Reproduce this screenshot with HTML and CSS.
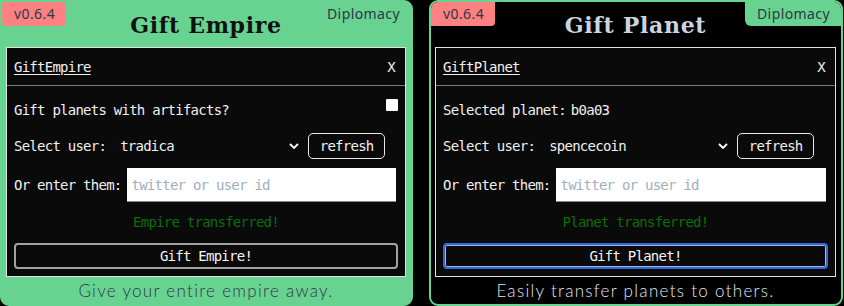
FILE: index.html
```html
<!DOCTYPE html>
<html>
<head>
<meta charset="utf-8">
<link rel="stylesheet" href="styles.css">
</head>
<body>
<div class="page">
  <section class="card card-green">
    <span class="badge version">v0.6.4</span>
    <span class="badge tag">Diplomacy</span>
    <h1 class="title">Gift Empire</h1>
    <div class="panel">
      <div class="panel-head"><span class="panel-name">GiftEmpire</span><span class="close">X</span></div>
      <div class="panel-body">
        <div class="row row-first"><span>Gift planets with artifacts?</span><input class="check" type="checkbox"></div>
        <div class="row row-select">
          <span class="label">Select user:</span>
          <div class="select"><span class="select-value">tradica</span><svg class="chev" width="10" height="6" viewBox="0 0 10 6"><path d="M1 1 L5 5 L9 1" fill="none" stroke="#fff" stroke-width="1.8"/></svg></div>
          <button class="refresh">refresh</button>
        </div>
        <div class="row row-input"><span class="label">Or enter them:</span><input class="text" type="text" placeholder="twitter or user id"></div>
        <p class="status">Empire transferred!</p>
        <button class="gift">Gift Empire!</button>
      </div>
    </div>
    <p class="desc">Give your entire empire away.</p>
  </section>
  <section class="card card-dark">
    <span class="badge version">v0.6.4</span>
    <span class="badge tag">Diplomacy</span>
    <h1 class="title">Gift Planet</h1>
    <div class="panel">
      <div class="panel-head"><span class="panel-name">GiftPlanet</span><span class="close">X</span></div>
      <div class="panel-body">
        <div class="row row-first"><span>Selected planet:</span><span class="planet">b0a03</span></div>
        <div class="row row-select">
          <span class="label">Select user:</span>
          <div class="select"><span class="select-value">spencecoin</span><svg class="chev" width="10" height="6" viewBox="0 0 10 6"><path d="M1 1 L5 5 L9 1" fill="none" stroke="#fff" stroke-width="1.8"/></svg></div>
          <button class="refresh">refresh</button>
        </div>
        <div class="row row-input"><span class="label">Or enter them:</span><input class="text" type="text" placeholder="twitter or user id"></div>
        <p class="status">Planet transferred!</p>
        <button class="gift gift-focus">Gift Planet!</button>
      </div>
    </div>
    <p class="desc">Easily transfer planets to others.</p>
  </section>
</div>
</body>
</html>
```
FILE: styles.css
```css
html, body {
  margin: 0;
  padding: 0;
  background: #000;
}
.page {
  display: flex;
  gap: 16px;
  height: 306px;
  overflow: hidden;
}
.card {
  position: relative;
  box-sizing: border-box;
  height: 306px;
  border: 2px solid #68d391;
  border-radius: 9px;
  padding: 0 5px 0 4px;
  display: flex;
  flex-direction: column;
}
.card-green {
  width: 413px;
  background: #68d391;
  border-top-left-radius: 0;
}
.card-dark {
  width: 414px;
  background: #000;
}
.badge {
  position: absolute;
  top: 0;
  height: 24px;
  line-height: 24px;
  font-family: "Noto Sans", sans-serif;
  font-size: 14px;
  letter-spacing: 0.4px;
  color: #2d3748;
}
.version {
  left: 0;
  width: 64px;
  box-sizing: border-box;
  padding-left: 12px;
  background: #fc8181;
  border-radius: 4px;
}
.card-dark .version {
  border-radius: 7px 0 4px 0;
}
.tag {
  right: 0;
  width: 96px;
  box-sizing: border-box;
  padding-left: 12px;
  background: #68d391;
  border-radius: 0 7px 0 6px;
}
.title {
  margin: 0;
  height: 45px;
  line-height: 46px;
  text-align: center;
  font-family: "DejaVu Serif", serif;
  font-weight: bold;
  font-size: 22px;
  letter-spacing: 0.7px;
  color: #111;
}
.card-dark .title {
  color: #cbd5e0;
}
.panel {
  box-sizing: border-box;
  height: 230px;
  border: 1px solid #e2e2e2;
  background: #0a0a0a;
  color: #f0f0f0;
  font-family: "DejaVu Sans Mono", monospace;
  font-size: 14px;
  letter-spacing: -0.75px;
  display: flex;
  flex-direction: column;
}
.panel-head {
  height: 37px;
  border-bottom: 1px solid #7a7a7a;
  display: flex;
  align-items: center;
  justify-content: space-between;
  padding: 0 10px 0 7px;
}
.panel-name {
  text-decoration: underline;
  text-underline-offset: 2px;
}
.panel-body {
  padding: 12px 7px 6px 7px;
  display: flex;
  flex-direction: column;
}
.row {
  display: flex;
  align-items: center;
}
.row-first {
  height: 24px;
  justify-content: space-between;
}
.card-dark .row-first {
  justify-content: flex-start;
}
.planet {
  margin-left: 5px;
}
.check {
  appearance: none;
  -webkit-appearance: none;
  margin: 0;
  align-self: flex-start;
  margin-top: 1px;
  width: 12px;
  height: 12px;
  background: #fff;
  border-radius: 1px;
}
.row-select {
  margin-top: 11px;
  height: 26px;
}
.label {
  white-space: nowrap;
}
.select {
  margin-left: 7px;
  width: 187px;
  box-sizing: border-box;
  padding: 0 1px 0 7px;
  display: flex;
  align-items: center;
  justify-content: space-between;
}
.chev {
  display: block;
}
.refresh {
  margin-left: 8px;
  width: 77px;
  height: 26px;
  box-sizing: border-box;
  background: transparent;
  border: 1px solid #e8e8e8;
  border-radius: 5px;
  color: #f0f0f0;
  font-family: "DejaVu Sans Mono", monospace;
  font-size: 14px;
  letter-spacing: -0.75px;
  padding: 0;
}
.row-input {
  margin-top: 9px;
  height: 34px;
}
.text {
  flex: 1;
  min-width: 0;
  height: 34px;
  box-sizing: border-box;
  margin: 0 2px 0 5px;
  padding: 0 5px;
  border: none;
  border-bottom: 1px solid #8a8a8a;
  background: #fff;
  font-family: "DejaVu Sans Mono", monospace;
  font-size: 14px;
  letter-spacing: -0.75px;
  outline: none;
}
.text::placeholder {
  color: #a0aec0;
}
.status {
  margin: 10px 0 0;
  height: 20px;
  line-height: 20px;
  text-align: center;
  color: #086f08;
}
.gift {
  margin-top: 11px;
  width: 100%;
  height: 26px;
  box-sizing: border-box;
  background: transparent;
  border: 2px solid #a3a3a3;
  border-radius: 4px;
  color: #f4f4f4;
  font-family: "DejaVu Sans Mono", monospace;
  font-size: 14px;
  letter-spacing: -0.75px;
  padding: 0;
}
.gift-focus {
  border-color: #3467d6;
  box-shadow: inset 0 0 0 1px #9db6ee;
}
.desc {
  margin: 0;
  flex: 1;
  display: flex;
  align-items: center;
  justify-content: center;
  font-family: "Lato", sans-serif;
  font-weight: 300;
  font-size: 17px;
  letter-spacing: 1.3px;
  color: #2d3748;
  padding-bottom: 1px;
}
.card-dark .desc {
  color: #e2e8f0;
}
```
